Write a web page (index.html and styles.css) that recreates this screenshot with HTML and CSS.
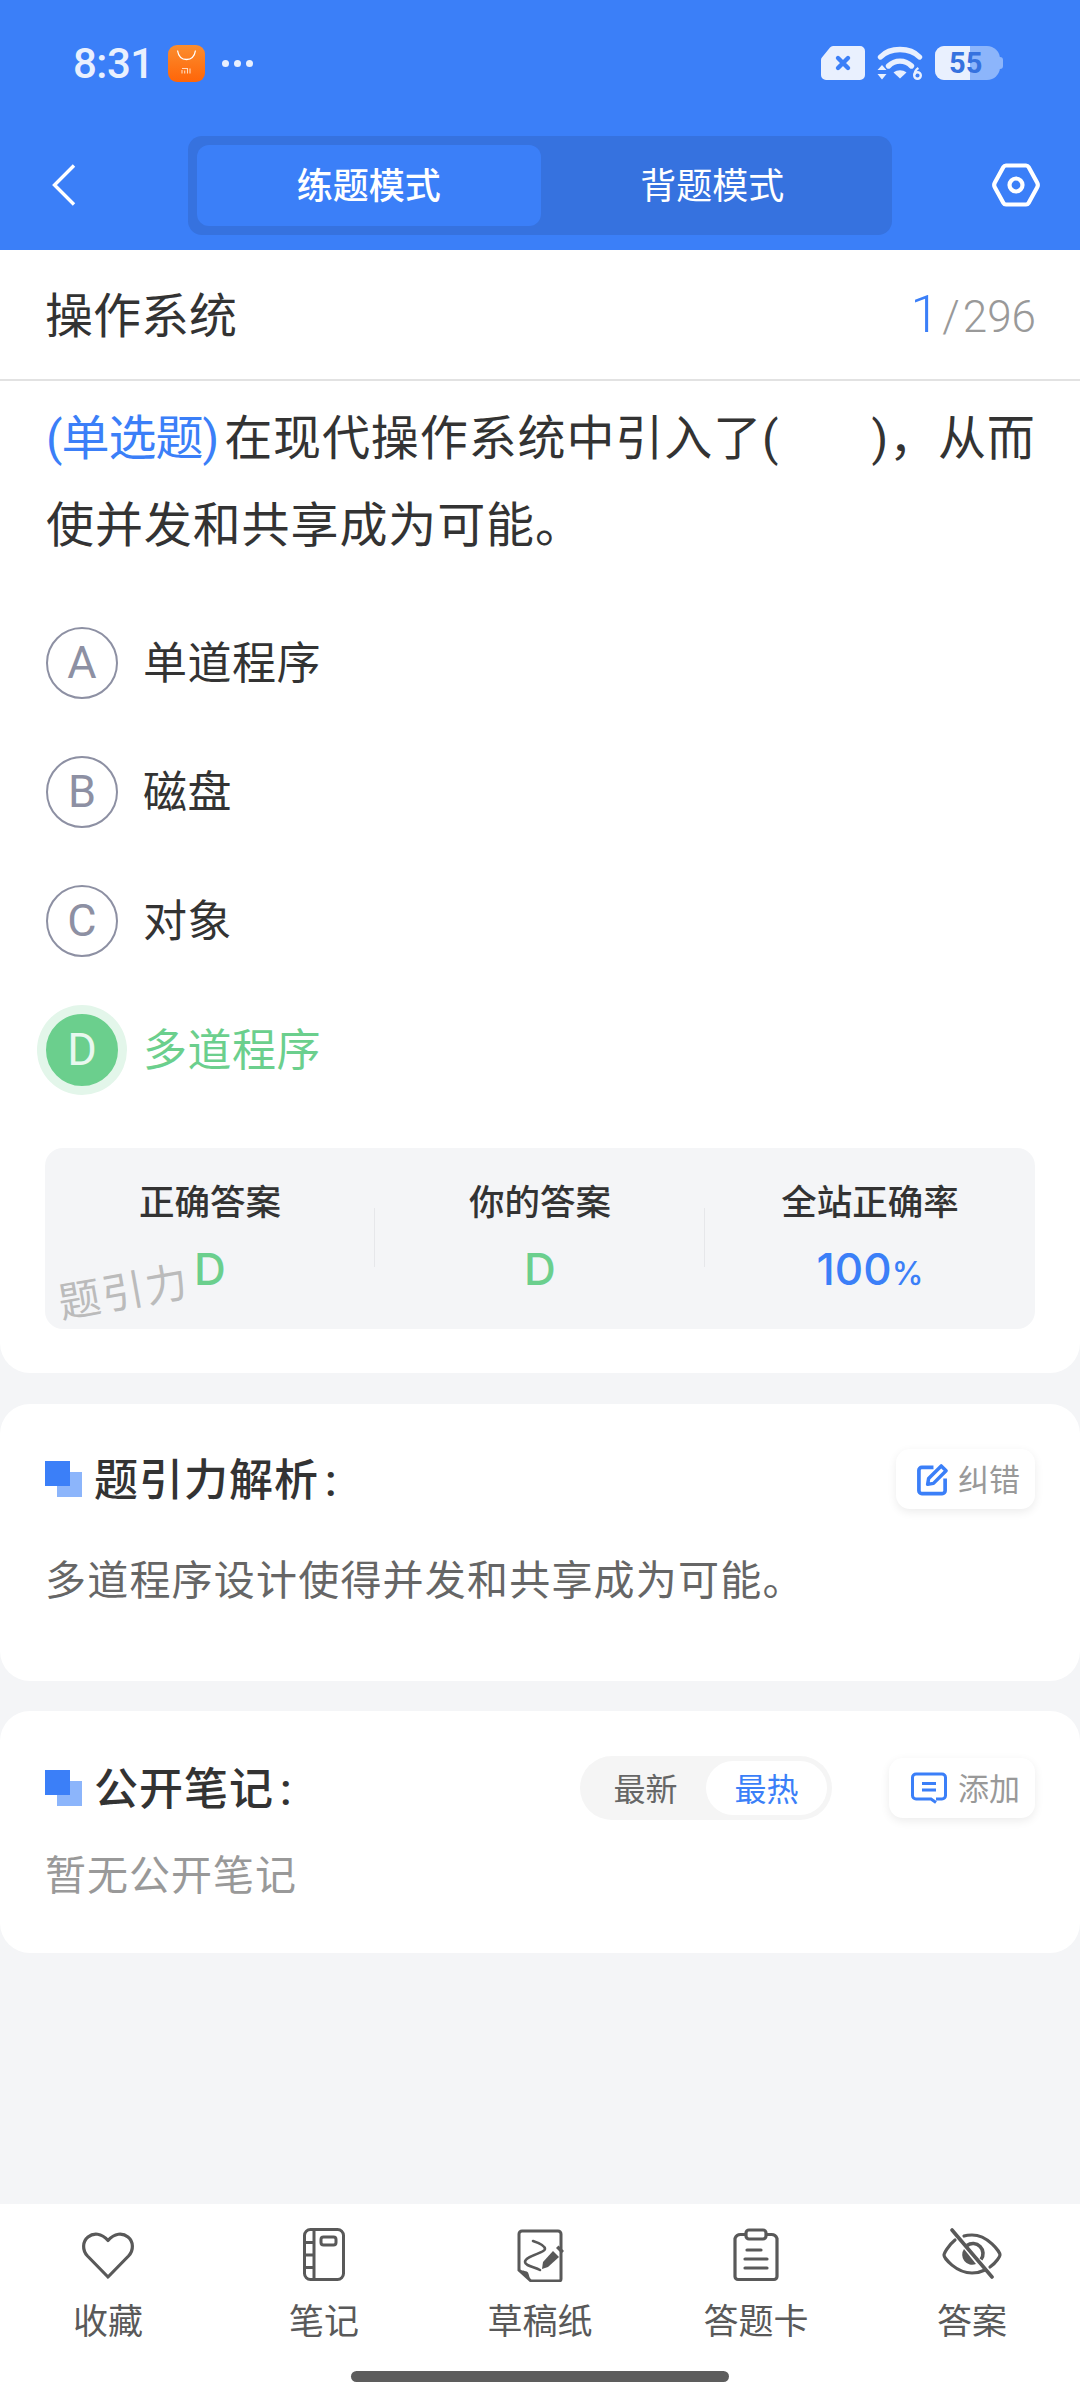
FILE: index.html
```html
<!DOCTYPE html>
<html lang="zh-CN">
<head>
	<meta charset="utf-8" />
	<title>操作系统</title>
	<link rel="stylesheet" href="styles.css">
</head>
<body>
	<header class="top">
		<div class="status">
			<span class="time">8:31</span>
			<svg class="shop" width="37" height="37" viewBox="0 0 37 37">
				<defs><linearGradient id="shopfill" x1="0" y1="0" x2="0" y2="1"><stop offset="0" stop-color="#fb8d2e"/><stop offset="1" stop-color="#ff6508"/></linearGradient></defs>
				<rect width="37" height="37" rx="9" fill="url(#shopfill)"/>
				<path d="M9.500 5.500c1 6 4.500 9 9 9s8-3 9-9" fill="none" stroke="#fff" stroke-width="1.300"/>
				<path d="M14 23.500h5.500v5M16.700 25.500v3M14 25v3.500M22 23.500v5" fill="none" stroke="#ffd9bd" stroke-width="1.100"/>
			</svg>
			<span class="dots"><i></i><i></i><i></i></span>
			<span class="spacer"></span>
			<svg width="44" height="34" viewBox="0 0 44 34">
				<path d="M12 0h27a5 5 0 0 1 5 5v24a5 5 0 0 1-5 5H5a5 5 0 0 1-5-5V14a4 4 0 0 1 1.300-3L9 1.500A5 5 0 0 1 12 0z" fill="#e9f0fe"/>
				<path d="M17 12l10 10M27 12L17 22" stroke="#3b7ff8" stroke-width="4.400" stroke-linecap="round"/>
			</svg>
			<svg class="wifi" width="46" height="35" viewBox="0 0 46 35">
				<path d="M3.500 11C13 1 33 1 42.500 11" fill="none" stroke="#e9f0fe" stroke-width="5.400" stroke-linecap="round"/>
				<path d="M11.500 20c6.500-6.500 16.500-6.500 23 0" fill="none" stroke="#e9f0fe" stroke-width="5.400" stroke-linecap="round"/>
				<path d="M16.500 26.500c4-3 9-3 13 0L23 32.500z" fill="#e9f0fe"/>
				<path d="M0.500 24l4.500-5 4.500 5zM0.500 28h9L5 33.500z" fill="#e9f0fe"/>
				<circle cx="40.500" cy="29.500" r="3.300" fill="none" stroke="#e9f0fe" stroke-width="2.400"/>
				<path d="M37.400 29c.3-3.500 1.500-5.500 4-7" fill="none" stroke="#e9f0fe" stroke-width="2.400"/>
			</svg>
			<div class="battery">
				<span class="batfill"></span>
				<span class="batnum">55</span>
				<span class="battip"></span>
			</div>
		</div>
		<div class="nav">
			<svg class="back" width="24" height="42" viewBox="0 0 24 42"><path d="M22 1.500L2.500 21 22 40.500" fill="none" stroke="#fff" stroke-width="3.400"/></svg>
			<div class="modes">
				<div class="mode active">练题模式</div>
				<div class="mode">背题模式</div>
			</div>
			<svg class="gear" width="48" height="44" viewBox="0 0 48 44">
				<path d="M14 2.500h20a3 3 0 0 1 2.600 1.500l8.500 15.500a5 5 0 0 1 0 5L36.600 40a3 3 0 0 1-2.600 1.500H14a3 3 0 0 1-2.600-1.500L2.900 24.500a5 5 0 0 1 0-5L11.400 4A3 3 0 0 1 14 2.500z" fill="none" stroke="#fff" stroke-width="4.200"/>
				<circle cx="24" cy="22" r="6.500" fill="none" stroke="#fff" stroke-width="4.200"/>
			</svg>
		</div>
	</header>

	<main class="content">
		<section class="question">
			<div class="subject">
				<span class="subject-name">操作系统</span>
				<span class="count"><b>1</b><em>/</em>296</span>
			</div>
			<p class="stem"><span class="type">(单选题)</span>在现代操作系统中引入了(<span class="blank"></span>)，从而<br>使并发和共享成为可能。</p>
			<div class="options">
				<div class="option"><span class="letter">A</span><span class="opt-text">单道程序</span></div>
				<div class="option"><span class="letter">B</span><span class="opt-text">磁盘</span></div>
				<div class="option"><span class="letter">C</span><span class="opt-text">对象</span></div>
				<div class="option right"><span class="letter">D</span><span class="opt-text">多道程序</span></div>
			</div>
			<div class="stats">
				<div class="stat"><span class="label">正确答案</span><span class="value green">D</span></div>
				<div class="stat"><span class="label">你的答案</span><span class="value green">D</span></div>
				<div class="stat"><span class="label">全站正确率</span><span class="value blue">100<small>%</small></span></div>
				<span class="watermark">题引力</span>
			</div>
		</section>

		<section class="card analysis">
			<div class="card-head">
				<span class="mark"></span>
				<h2>题引力解析<span class="colon">:</span></h2>
				<span class="spacer"></span>
				<span class="tool fix">
					<svg width="33" height="33" viewBox="0 0 34 34"><path d="M18 4.500H6a3 3 0 0 0-3 3v21a3 3 0 0 0 3 3h21a3 3 0 0 0 3-3V16" fill="none" stroke="#3b7ff8" stroke-width="3.800"/><path d="M13 16L26 3l5 5-13 13-6 1z" fill="none" stroke="#3b7ff8" stroke-width="3.600" stroke-linejoin="round"/></svg>
					<span class="tool-text">纠错</span>
				</span>
			</div>
			<p class="analysis-text">多道程序设计使得并发和共享成为可能。</p>
		</section>

		<section class="card notes">
			<div class="card-head">
				<span class="mark"></span>
				<h2>公开笔记<span class="colon">:</span></h2>
				<span class="spacer"></span>
				<div class="sort">
					<span class="sort-item">最新</span>
					<span class="sort-item active">最热</span>
				</div>
				<span class="tool add">
					<svg width="36" height="32" viewBox="0 0 36 32"><path d="M25 27h6a3.500 3.500 0 0 0 3.500-3.500v-18A3.500 3.500 0 0 0 31 2H5a3.500 3.500 0 0 0-3.500 3.500v18A3.500 3.500 0 0 0 5 27h15l5 3.500" fill="none" stroke="#3b7ff8" stroke-width="3"/><path d="M11 11.500h14M11 18h14" stroke="#3b7ff8" stroke-width="3"/></svg>
					<span class="tool-text">添加</span>
				</span>
			</div>
			<p class="empty">暂无公开笔记</p>
		</section>
	</main>

	<footer class="bottom">
		<div class="tabs">
			<div class="tab">
				<svg width="54" height="54" viewBox="0 0 54 54"><path d="M27 49L6.500 28C1 22 1.500 13.500 7 9s13.500-4 20 3.500C33.500 5 41.500 4.500 47 9s6 13 .5 19z" fill="none" stroke="#595959" stroke-width="3.200" stroke-linejoin="round"/></svg>
				<span>收藏</span>
			</div>
			<div class="tab">
				<svg width="54" height="54" viewBox="0 0 54 54"><rect x="7.500" y="1.500" width="39" height="50" rx="6" fill="none" stroke="#595959" stroke-width="3"/><path d="M17 2v49M8 14.500h9M8 27h9M8 39.500h9" stroke="#595959" stroke-width="3"/><rect x="24" y="9" width="15" height="8" rx="2.500" fill="none" stroke="#595959" stroke-width="3"/></svg>
				<span>笔记</span>
			</div>
			<div class="tab">
				<svg width="54" height="54" viewBox="0 0 54 54">
					<path d="M6 42V6a3 3 0 0 1 3-3h36a3 3 0 0 1 3 3v45a2 2 0 0 1-2 2H18z" fill="none" stroke="#595959" stroke-width="3"/>
					<path d="M6 42c4 .5 8 1 9 2.500 1 2 1.500 5.500 3 9z" fill="#595959"/>
					<path d="M20 13c6 2 12 5 12 8 0 4-20 7-20 13 0 4 10 5 15 8" fill="none" stroke="#595959" stroke-width="2.600" stroke-linecap="round"/>
					<path d="M40 23l6 6-11 10-6 2 1-7z" fill="#595959"/>
					<path d="M43 20l2.500-2.500 5.500 5.500-2.500 2.500z" fill="#595959"/>
				</svg>
				<span>草稿纸</span>
			</div>
			<div class="tab">
				<svg width="54" height="54" viewBox="0 0 54 54"><path d="M16 6.500h-4a6 6 0 0 0-6 4v38a3 3 0 0 0 3 3h36a3 3 0 0 0 3-3v-38a6 6 0 0 0-6-4h-4" fill="none" stroke="#595959" stroke-width="3.200"/><rect x="17" y="2" width="20" height="9" rx="3" fill="none" stroke="#595959" stroke-width="3.200"/><path d="M18 22h14M16 31h22M16 40h22" stroke="#595959" stroke-width="3.200" stroke-linecap="round"/></svg>
				<span>答题卡</span>
			</div>
			<div class="tab">
				<svg width="60" height="54" viewBox="0 0 60 54"><path d="M13 12C5.500 18 2 26 2 27c0 3 12 18 28 18 5 0 9-1 13-3M22 8c3-1 5-1 8-1 16 0 28 17 28 20 0 1-3 7-10 12" fill="none" stroke="#595959" stroke-width="3.200" stroke-linecap="round"/><path d="M10 2l40 47" stroke="#595959" stroke-width="3.600" stroke-linecap="round"/><path d="M22 21a10 10 0 0 0 12 15z" fill="#595959"/><path d="M25 17.500a10 10 0 0 1 14 14" fill="none" stroke="#595959" stroke-width="3.600"/></svg>
				<span>答案</span>
			</div>
		</div>
		<div class="pill"></div>
	</footer>
</body>
</html>
```

FILE: styles.css
```css
* {
	box-sizing: border-box;
}
html, body {
	height: 100%;
}
body {
	margin: 0;
	height: 2400px;
	display: flex;
	flex-direction: column;
	background-color: #f4f5f7;
	color: #333;
	font-family: Roboto, "Noto Sans CJK SC", sans-serif;
}
p, h2 {
	margin: 0;
}
.spacer {
	flex: 1;
}

/* Header */
.top {
	height: 250px;
	background-color: #3b7ff8;
}
.status {
	height: 126px;
	display: flex;
	align-items: center;
	padding: 0 80px 0 73px;
	color: #e9f0fe;
}
.time {
	width: 95px;
	font-size: 42px;
	font-weight: 500;
	letter-spacing: -0.5px;
}
.shop {
	margin-top: 1px;
}
.dots {
	display: flex;
	gap: 5px;
	margin-left: 17px;
}
.dots i {
	width: 7px;
	height: 7px;
	border-radius: 50%;
	background-color: #e9f0fe;
}
.wifi {
	margin-left: 12px;
}
.battery {
	position: relative;
	width: 65px;
	height: 34px;
	margin-left: 12px;
	border-radius: 9px 13px 13px 9px;
	background-color: #8cb5fb;
}
.batfill {
	display: block;
	width: 35px;
	height: 34px;
	border-radius: 9px 0 0 9px;
	background-color: #e9f0fe;
}
.batnum {
	position: absolute;
	left: 14px;
	top: 0;
	font-size: 29px;
	line-height: 34px;
	font-weight: 700;
	color: #3672df;
}
.battip {
	position: absolute;
	right: -3px;
	top: 11px;
	width: 4px;
	height: 12px;
	border-radius: 0 3px 3px 0;
	background-color: #8cb5fb;
}
.nav {
	height: 124px;
	display: flex;
	align-items: flex-start;
	padding: 10px 40px 0 52px;
}
.back {
	margin-top: 28px;
}
.modes {
	width: 704px;
	height: 99px;
	margin-left: 112px;
	padding: 9px 8px 9px 9px;
	display: flex;
	border-radius: 14px;
	background-color: #3672df;
}
.mode {
	flex: 1;
	display: flex;
	align-items: center;
	justify-content: center;
	padding-bottom: 5px;
	font-size: 36px;
	color: #fff;
	border-radius: 12px;
}
.mode.active {
	background-color: #3b7ff8;
	font-weight: 500;
}
.gear {
	margin-left: 100px;
	margin-top: 27px;
}

/* Question */
.question {
	height: 1123px;
	padding-bottom: 44px;
	border-radius: 0 0 30px 30px;
	background-color: #fff;
}
.subject {
	height: 131px;
	display: flex;
	align-items: center;
	justify-content: space-between;
	padding: 0 44px 0 45px;
	border-bottom: 2px solid #e2e2e2;
}
.subject-name {
	padding-bottom: 5px;
	font-size: 48px;
}
.count {
	display: flex;
	align-items: baseline;
	font-size: 44px;
	font-weight: 300;
	color: #999;
}
.count b {
	font-size: 52px;
	font-weight: 300;
	color: #3b7ff8;
}
.count em {
	font-style: normal;
	margin: 0 3px 0 3px;
}
.stem {
	padding: 0 40px 0 46px;
	margin-top: 14px;
	font-size: 48px;
	line-height: 87px;
	letter-spacing: 0.9px;
}
.type {
	margin-right: 6px;
	letter-spacing: -1px;
	color: #3b7ff8;
}
.blank {
	display: inline-block;
	width: 92px;
}
.options {
	margin-top: 29px;
	padding: 0 46px;
}
.option {
	height: 129px;
	display: flex;
	align-items: center;
	gap: 25px;
	font-size: 44px;
}
.opt-text {
	padding-bottom: 6px;
	letter-spacing: 0.5px;
}
.letter {
	width: 72px;
	height: 72px;
	display: flex;
	align-items: center;
	justify-content: center;
	border: 2px solid #8d90a3;
	border-radius: 50%;
	font-size: 45px;
	font-weight: 400;
	color: #8d90a3;
}
.option.right {
	color: #6bcf8d;
}
.option.right .letter {
	border-color: #6bcf8d;
	background-color: #6bcf8d;
	color: #e9f8ef;
	box-shadow: 0 0 0 9px #e3f6ea;
}
.stats {
	position: relative;
	height: 181px;
	margin: 34px 45px 0;
	display: flex;
	align-items: center;
	border-radius: 18px;
	background-color: #f4f5f7;
	overflow: hidden;
}
.stat {
	flex: 1;
	height: 100%;
	display: flex;
	flex-direction: column;
	align-items: center;
	padding-top: 33px;
	position: relative;
}
.stat + .stat::before {
	content: "";
	position: absolute;
	left: -1px;
	top: 60px;
	height: 59px;
	border-left: 1px solid #e6e7ea;
}
.label {
	font-size: 35.500px;
	line-height: 44px;
	font-weight: 500;
}
.value {
	margin-top: 17px;
	font-family: Inter, Roboto, sans-serif;
	font-size: 44px;
	line-height: 54px;
	font-weight: 500;
}
.green {
	color: #6bcf8d;
}
.blue {
	color: #3b7ff8;
}
.value small {
	font-size: 32px;
}
.watermark {
	position: absolute;
	left: 13px;
	top: 116px;
	font-size: 42px;
	line-height: 58px;
	letter-spacing: 2px;
	color: #bbb;
	transform: rotate(-10deg);
}

/* Cards */
.card {
	margin-top: 31px;
	padding: 0 45px;
	border-radius: 30px;
	background-color: #fff;
}
.analysis {
	height: 277px;
	padding-top: 45px;
}
.notes {
	height: 242px;
	margin-top: 30px;
	padding-top: 47px;
}
.card-head {
	height: 60px;
	display: flex;
	align-items: center;
}
.mark {
	position: relative;
	width: 37px;
	height: 36px;
	margin-right: 12px;
}
.mark::before, .mark::after {
	content: "";
	position: absolute;
	width: 25px;
	height: 25px;
}
.mark::before {
	right: 0;
	bottom: 0;
	background-color: #8cb5fb;
}
.mark::after {
	left: 0;
	top: 0;
	background-color: #3b7ff8;
}
.card-head h2 {
	margin-top: -4px;
	font-size: 44px;
	font-weight: 500;
	letter-spacing: 1px;
	color: #333;
}
.colon {
	margin-left: 6px;
}
.tool {
	height: 60px;
	display: flex;
	align-items: center;
	gap: 9px;
	border-radius: 14px;
	background-color: #fff;
	box-shadow: 0 3px 10px rgba(0, 0, 0, 0.08);
	font-size: 31px;
	color: #999;
}
.tool-text {
	padding-bottom: 3px;
}
.tool.fix {
	padding: 0 15px 0 20px;
}
.tool.add {
	gap: 11px;
	padding: 0 15px 0 22px;
}
.analysis-text {
	margin-top: 40px;
	font-size: 41px;
	line-height: 64px;
	letter-spacing: 1.200px;
	color: #666;
}
.sort {
	width: 252px;
	height: 64px;
	margin-right: 57px;
	padding: 5px;
	display: flex;
	border-radius: 32px;
	background-color: #f5f5f5;
}
.sort-item {
	flex: 1;
	display: flex;
	align-items: center;
	justify-content: center;
	padding-bottom: 2px;
	font-size: 32px;
	color: #666;
	border-radius: 27px;
}
.sort-item.active {
	background-color: #fff;
	color: #3b7ff8;
}
.empty {
	margin-top: 28px;
	font-size: 41px;
	line-height: 60px;
	letter-spacing: 1px;
	color: #999;
}

/* Bottom bar */
.bottom {
	margin-top: auto;
	height: 196px;
	background-color: #fff;
}
.tabs {
	display: grid;
	grid-template-columns: repeat(5, 1fr);
	height: 167px;
	padding-top: 24px;
}
.tab {
	display: flex;
	flex-direction: column;
	align-items: center;
	font-size: 35px;
	line-height: 50px;
	color: #595959;
}
.tab span {
	margin-top: 16px;
}
.pill {
	width: 378px;
	height: 11px;
	margin: 0 auto;
	border-radius: 6px;
	background-color: #5d5d5d;
}
```
